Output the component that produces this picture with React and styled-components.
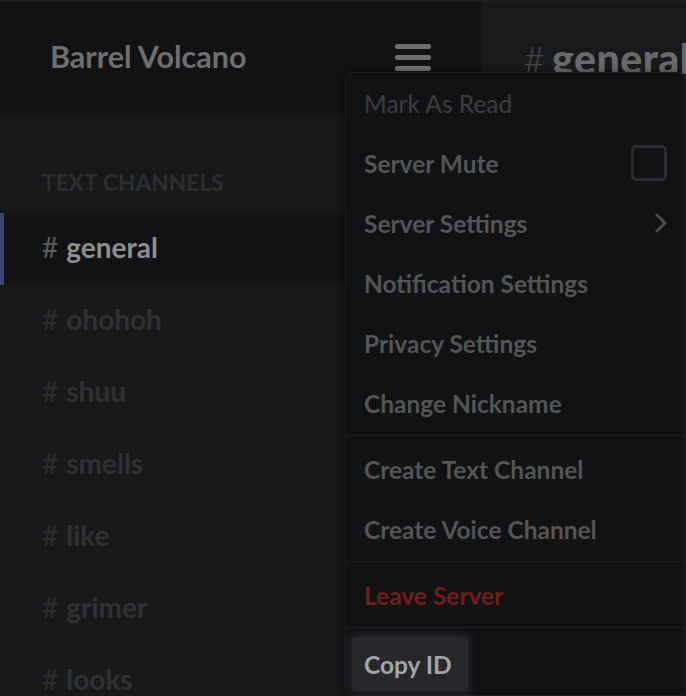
import React from 'react'
import styled, { createGlobalStyle } from 'styled-components'

const GlobalStyle = createGlobalStyle`
  html, body {
    margin: 0;
    padding: 0;
    background: #17181a;
  }
  * {
    box-sizing: border-box;
  }
`

const Screen = styled.div`
  position: relative;
  width: 686px;
  height: 696px;
  overflow: hidden;
  display: flex;
  font-family: Lato, 'Open Sans', sans-serif;
  background: #17181a;
`

const Sidebar = styled.aside`
  width: 481px;
  flex-shrink: 0;
  display: flex;
  flex-direction: column;
  background: #17181a;
`

const ServerHeader = styled.header`
  height: 115px;
  flex-shrink: 0;
  display: flex;
  align-items: center;
  justify-content: space-between;
  padding: 0 50px 5px;
  background: #111214;
  border-top: 2px solid #1c1d1f;
`

const ServerName = styled.h1`
  margin: 0;
  font-size: 30.5px;
  font-weight: 700;
  color: #6f6f71;
`

const Hamburger = styled.div`
  width: 36px;
  margin-top: 3px;
  display: flex;
  flex-direction: column;
  gap: 6px;
  span {
    display: block;
    height: 5px;
    border-radius: 2px;
    background: #707072;
  }
`

const ChannelList = styled.nav`
  display: flex;
  flex-direction: column;
  padding-top: 56px;
`

const Category = styled.div`
  padding-left: 42px;
  margin-bottom: 18px;
  line-height: 24px;
  font-size: 22.5px;
  font-weight: 700;
  text-transform: uppercase;
  letter-spacing: 0.2px;
  color: #2c2d2f;
`

const ChannelRow = styled.div`
  height: 72px;
  flex-shrink: 0;
  display: flex;
  align-items: center;
  padding: 0 0 5px 38px;
  border-left: 4px solid ${(p) => (p.$active ? '#3b4470' : 'transparent')};
  background: ${(p) => (p.$active ? '#111214' : 'transparent')};
  font-size: 28px;
  font-weight: 700;
  color: ${(p) => (p.$active ? '#8e8f91' : '#2f3032')};
`

const Hash = styled.span`
  margin-right: 8px;
  font-weight: 400;
  color: ${(p) => (p.$active ? '#5c5d5f' : '#2c2d2f')};
`

const Chat = styled.main`
  flex: 1;
  display: flex;
  flex-direction: column;
  background: #1b1c1e;
`

const ChatHeader = styled.header`
  height: 115px;
  flex-shrink: 0;
  display: flex;
  align-items: center;
  padding-left: 42px;
  background: #18191b;
  border-top: 2px solid #1c1d1f;
  white-space: nowrap;
`

const ChatHash = styled.span`
  color: #454649;
  font-size: 38px;
  font-weight: 300;
  margin-right: 7px;
`

const ChatTitle = styled.span`
  color: #6a6a6c;
  font-size: 41px;
  font-weight: 900;
  letter-spacing: 0.5px;
`

const Menu = styled.div`
  position: absolute;
  left: 345px;
  top: 72px;
  width: 341px;
  height: 624px;
  display: flex;
  flex-direction: column;
  background: #111214;
  border: 1px solid #1e1f22;
  border-radius: 9px;
  box-shadow: 0 0 6px rgba(0, 0, 0, 0.5);
`

const Item = styled.div`
  height: 60px;
  flex-shrink: 0;
  display: flex;
  align-items: center;
  justify-content: space-between;
  padding: 0 18px 0 6px;
`

const Label = styled.span`
  height: 54px;
  display: flex;
  align-items: center;
  padding: 0 ${(p) => (p.$tone === 'hover' ? 16 : 12)}px 0 12px;
  margin-top: ${(p) => (p.$tone === 'hover' ? 6 : 0)}px;
  border-radius: 3px;
  font-size: 24.5px;
  font-weight: ${(p) => (p.$tone === 'disabled' ? 400 : 700)};
  color: ${(p) =>
    ({
      disabled: '#3c3d3f',
      danger: '#731e1e',
      hover: '#a4a5a7'
    })[p.$tone] || '#545557'};
  background: ${(p) => (p.$tone === 'hover' ? '#26282c' : 'transparent')};
  box-shadow: ${(p) => (p.$tone === 'hover' ? '0 0 8px 3px rgba(38, 40, 44, 0.85)' : 'none')};
`

const Checkbox = styled.span`
  width: 36px;
  height: 36px;
  border: 3px solid #2b2c2f;
  border-radius: 5px;
`

const Separator = styled.hr`
  flex-shrink: 0;
  margin: 2px 0 3px;
  border: 0;
  height: 1px;
  background: #1d1e21;
`

const Chevron = () => (
  <svg width='14' height='20' viewBox='0 0 14 20' style={{ marginRight: -1 }}>
    <polyline points='3,2 11,10 3,18' fill='none' stroke='#4b4c4f' strokeWidth='3' strokeLinecap='round' strokeLinejoin='round' />
  </svg>
)

const channels = ['general', 'ohohoh', 'shuu', 'smells', 'like', 'grimer', 'looks']

const groups = [
  [
    { label: 'Mark As Read', tone: 'disabled' },
    { label: 'Server Mute', extra: 'check' },
    { label: 'Server Settings', extra: 'arrow' },
    { label: 'Notification Settings' },
    { label: 'Privacy Settings' },
    { label: 'Change Nickname' }
  ],
  [{ label: 'Create Text Channel' }, { label: 'Create Voice Channel' }],
  [{ label: 'Leave Server', tone: 'danger' }],
  [{ label: 'Copy ID', tone: 'hover' }]
]

const App = () => {
  return (
    <>
      <GlobalStyle />
      <Screen>
        <Sidebar>
          <ServerHeader>
            <ServerName>Barrel Volcano</ServerName>
            <Hamburger>
              <span />
              <span />
              <span />
            </Hamburger>
          </ServerHeader>
          <ChannelList>
            <Category>Text Channels</Category>
            {channels.map((name, i) => (
              <ChannelRow key={name} $active={i === 0}>
                <Hash $active={i === 0}>#</Hash>
                {name}
              </ChannelRow>
            ))}
          </ChannelList>
        </Sidebar>
        <Chat>
          <ChatHeader>
            <ChatHash>#</ChatHash>
            <ChatTitle>general</ChatTitle>
          </ChatHeader>
        </Chat>
        <Menu>
          {groups.map((group, gi) => (
            <React.Fragment key={gi}>
              {gi > 0 && <Separator />}
              {group.map((item) => (
                <Item key={item.label}>
                  <Label $tone={item.tone}>{item.label}</Label>
                  {item.extra === 'check' && <Checkbox />}
                  {item.extra === 'arrow' && <Chevron />}
                </Item>
              ))}
            </React.Fragment>
          ))}
        </Menu>
      </Screen>
    </>
  )
}

export default App
